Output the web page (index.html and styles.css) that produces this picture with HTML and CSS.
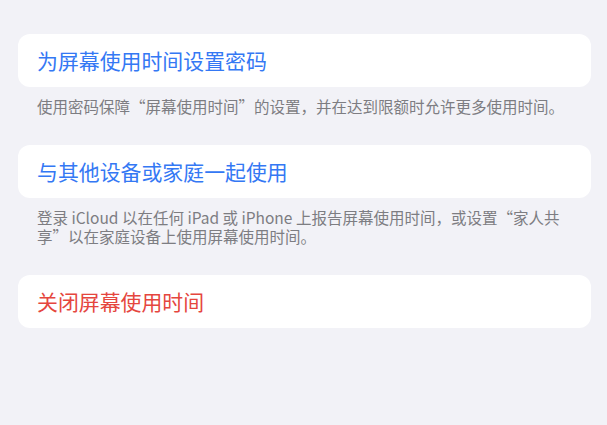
FILE: index.html
```html
<!DOCTYPE html>
<html lang="zh-CN">
<head>
<meta charset="utf-8">
<link rel="stylesheet" href="styles.css">
</head>
<body>
<div class="page">
  <section class="group">
    <div class="card"><span class="action blue">为屏幕使用时间设置密码</span></div>
    <p class="footer">使用密码保障“屏幕使用时间”的设置，并在达到限额时允许更多使用时间。</p>
  </section>
  <section class="group">
    <div class="card"><span class="action blue">与其他设备或家庭一起使用</span></div>
    <p class="footer">登录 iCloud 以在任何 iPad 或 iPhone 上报告屏幕使用时间，或设置“家人共享”以在家庭设备上使用屏幕使用时间。</p>
  </section>
  <section class="group">
    <div class="card"><span class="action red">关闭屏幕使用时间</span></div>
  </section>
</div>
</body>
</html>
```

FILE: styles.css
```css
html, body {
  margin: 0;
  padding: 0;
  background: #f2f2f7;
}
body {
  font-family: "Noto Sans CJK SC", "Noto Sans", sans-serif;
  width: 607px;
  height: 425px;
  overflow: hidden;
}
.page {
  padding: 34px 16px 0 18px;
  display: flex;
  flex-direction: column;
  gap: 29.5px;
}
.group {
  display: flex;
  flex-direction: column;
}
.card {
  background: #ffffff;
  border-radius: 12px;
  height: 53px;
  display: flex;
  align-items: center;
  padding: 0 19px;
}
.action {
  font-size: 20.9px;
  line-height: 1;
}
.blue { color: #3478f4; }
.red { color: #e5463e; }
.footer {
  margin: 10px 0 0;
  padding: 0 19px;
  font-size: 15.5px;
  line-height: 18.5px;
  color: #7d7d82;
}
```
